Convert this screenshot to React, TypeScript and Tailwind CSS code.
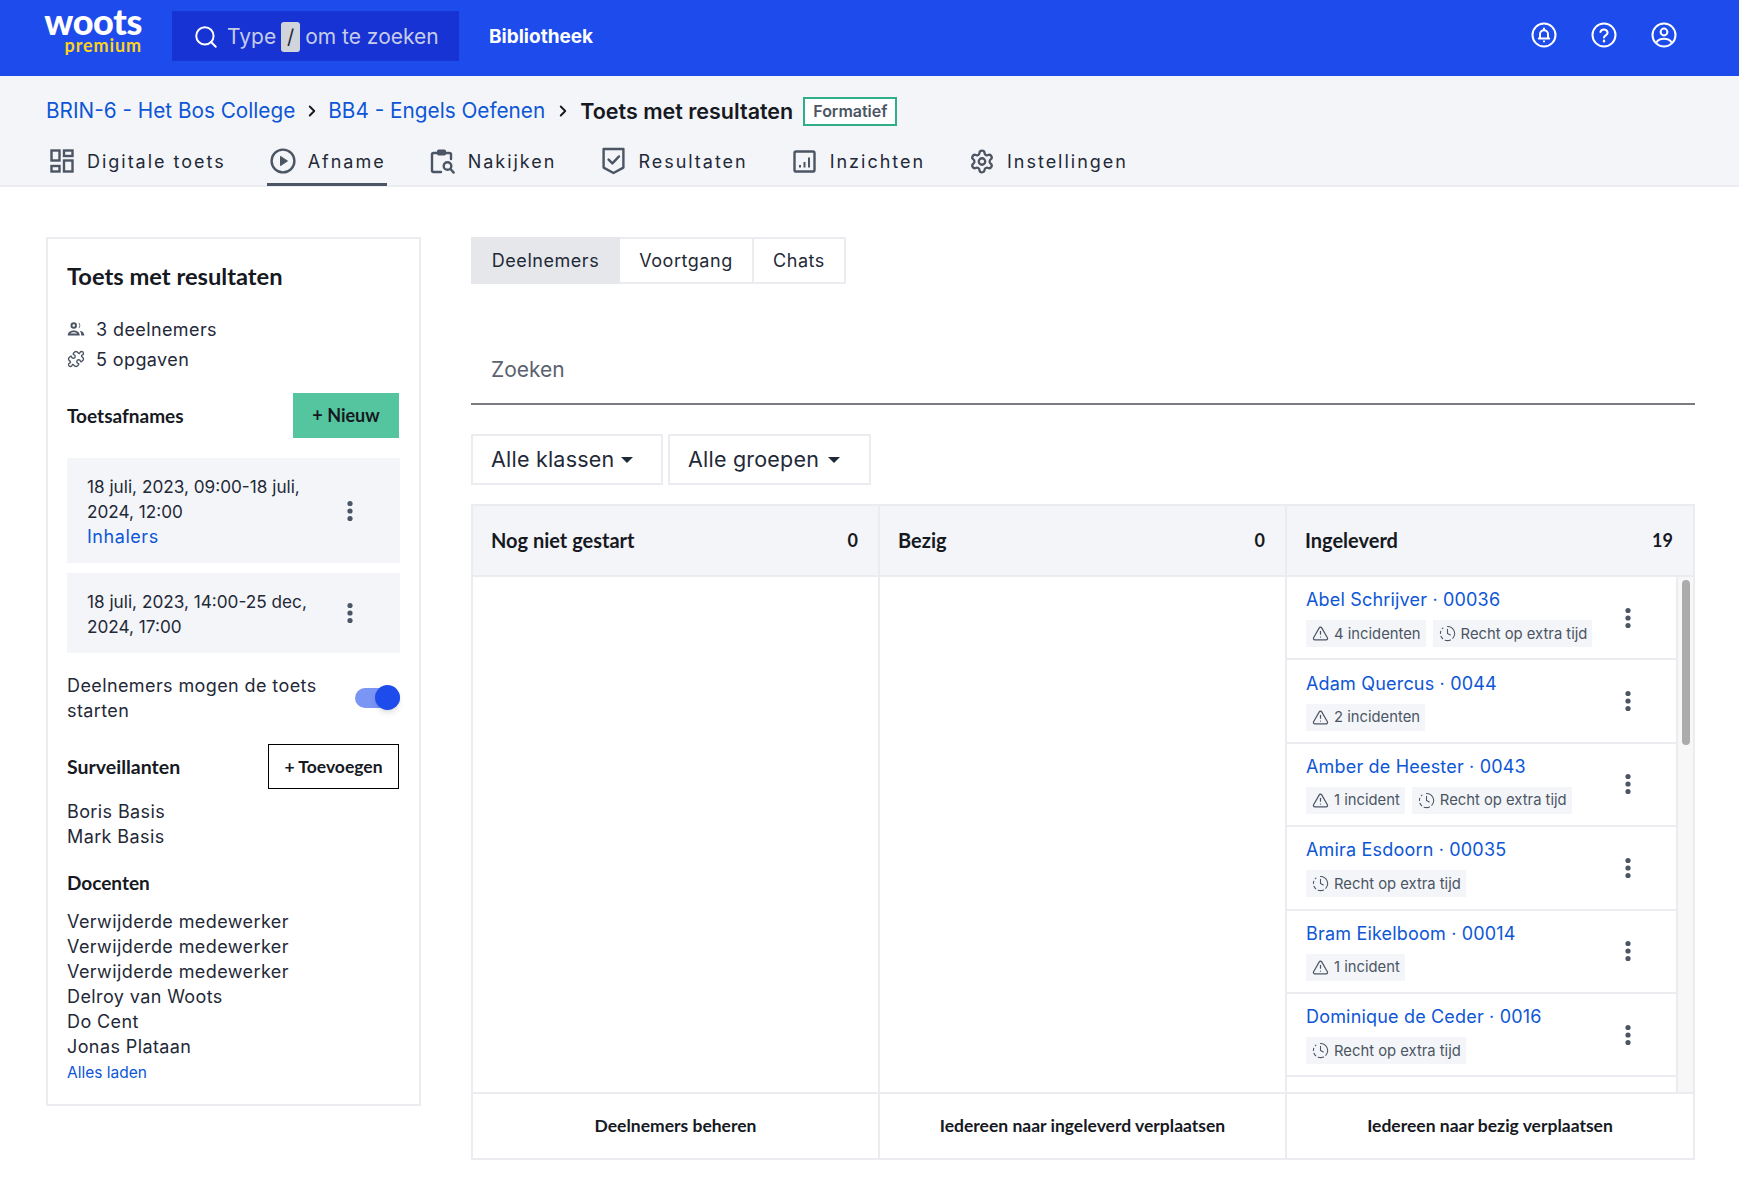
import React from "react";
import { Search, ChevronRight, Settings, TriangleAlert, ClockFading, Puzzle } from "lucide-react";

const HEAD = "font-['Lato',sans-serif] tracking-normal";
const LINE = "border-[#eaecef]";

function Dots() {
  return (
    <svg width="8" height="22" viewBox="0 0 8 22" className="shrink-0 fill-[#4b5563]">
      <circle cx="4" cy="3.5" r="2.6" />
      <circle cx="4" cy="11" r="2.6" />
      <circle cx="4" cy="18.5" r="2.6" />
    </svg>
  );
}

function BellCircle() {
  return (
    <svg width="26" height="26" viewBox="0 0 26 26" fill="none" stroke="white" strokeWidth="2">
      <circle cx="13" cy="13" r="11.5" />
      <path d="M9 16.5v-4.2a4 4 0 0 1 8 0v4.2zM7.8 16.5h10.4" strokeLinejoin="round" strokeLinecap="round" />
      <path d="M13 6.4v1.4M13 19.2v.4" strokeLinecap="round" />
    </svg>
  );
}
function HelpCircle() {
  return (
    <svg width="26" height="26" viewBox="0 0 26 26" fill="none" stroke="white" strokeWidth="2">
      <circle cx="13" cy="13" r="11.5" />
      <path d="M9.4 10a3.7 3.7 0 0 1 7.2 .8c0 2.4-3.6 2.6-3.6 4.8" strokeLinecap="round" />
      <path d="M13 18.8v.4" strokeLinecap="round" strokeWidth="2.4" />
    </svg>
  );
}
function UserCircle() {
  return (
    <svg width="26" height="26" viewBox="0 0 26 26" fill="none" stroke="white" strokeWidth="2">
      <circle cx="13" cy="13" r="11.5" />
      <circle cx="13" cy="10" r="3.4" />
      <path d="M5.4 20.4c1.6-2.6 4.4-3.7 7.6-3.7s6 1.1 7.6 3.7" />
    </svg>
  );
}

const ico = "stroke-[#4b5563] fill-none";
function GridIcon() {
  return (
    <svg width="24" height="24" viewBox="0 0 24 24" className={ico} strokeWidth="2.4">
      <rect x="1.5" y="1.5" width="8" height="10" />
      <rect x="14" y="1.500" width="8.500" height="5.500" />
      <rect x="1.5" y="17" width="8" height="5.500" />
      <rect x="14" y="11.500" width="8.500" height="11" />
    </svg>
  );
}
function PlayIcon() {
  return (
    <svg width="26" height="26" viewBox="0 0 26 26" className={ico} strokeWidth="2.4">
      <circle cx="13" cy="13" r="11.4" />
      <path d="M10.500 8.400l7 4.600-7 4.600z" className="fill-[#4b5563]" strokeWidth="1" strokeLinejoin="round" />
    </svg>
  );
}
function ClipSearch() {
  return (
    <svg width="26" height="27" viewBox="0 0 26 27" className={ico} strokeWidth="2.4">
      <path d="M11 24H3.500a1.500 1.500 0 0 1-1.500-1.500V6.500A1.500 1.500 0 0 1 3.500 5H7M16 5h3.500A1.500 1.500 0 0 1 21 6.500V11" strokeLinecap="round" />
      <rect x="7.500" y="2" width="8" height="5" rx="1" className="fill-[#4b5563]" strokeWidth="1" />
      <circle cx="17.500" cy="18" r="3.800" />
      <path d="M20.500 21l3.200 3.600" strokeLinecap="round" />
    </svg>
  );
}
function ShieldCheck() {
  return (
    <svg width="23" height="28" viewBox="0 0 23 28" className={ico} strokeWidth="2.4">
      <path d="M1.600 2h19.800v18.600L11.500 26 1.600 20.600z" strokeLinejoin="round" />
      <path d="M6.600 12.600l3.800 3.800 6.600-7" strokeLinecap="round" strokeLinejoin="round" />
    </svg>
  );
}
function ChartIcon() {
  return (
    <svg width="23" height="23" viewBox="0 0 23 23" className={ico} strokeWidth="2.4">
      <rect x="1.500" y="1.500" width="20" height="20" rx="1.600" />
      <path d="M7 15v2.500M11.500 12v5.500M16 7.500v10" strokeWidth="2" />
    </svg>
  );
}
function PeopleIcon() {
  return (
    <svg width="18" height="16" viewBox="0 0 24 20" className="fill-[#4b5563]">
      <path d="M9 1a4.300 4.300 0 1 1 0 8.600A4.300 4.300 0 0 1 9 1zm0 2.600a1.700 1.700 0 1 0 0 3.400 1.700 1.700 0 0 0 0-3.400z" />
      <path d="M14.800 1.200a4.300 4.300 0 0 1 0 8.200 6 6 0 0 0 0-8.200z" />
      <path d="M1 18.500c0-4.500 4-6.500 8-6.500s8 2 8 6.500zm3.400-2.400h9.200c-.8-1-2.600-1.700-4.600-1.700s-3.800.7-4.600 1.700z" />
      <path d="M17 12.200c3 .4 6 2.200 6 6.300h-4c0-2.700-.8-4.800-2-6.300z" />
    </svg>
  );
}

function TopTab({ icon, label, active }: { icon: React.ReactNode; label: string; active?: boolean }) {
  return (
    <div className={`flex items-center gap-3 h-[47px] pl-[3px] pr-[1px] border-b-[3px] ${active ? "border-[#4b5563]" : "border-transparent"}`}>
      <span className="w-[26px] h-7 flex items-center justify-center">{icon}</span>
      <span className="text-[18px] tracking-[0.11em] text-[#1f2937]">{label}</span>
    </div>
  );
}

function Badge({ kind, text }: { kind: "warn" | "time"; text: string }) {
  return (
    <span className="inline-flex items-center gap-[5px] h-[27px] pl-[6px] pr-[5px] bg-[#f4f5f9] text-[14.800px] tracking-normal text-[#4b5563]">
      {kind === "warn" ? (
        <TriangleAlert size={17} strokeWidth={1.7} className="text-[#4b5563]" />
      ) : (
        <ClockFading size={17} strokeWidth={1.5} className="text-[#4b5563]" />
      )}
      {text}
    </span>
  );
}

function Row({ name, badges }: { name: string; badges: { kind: "warn" | "time"; text: string }[] }) {
  return (
    <div className={`h-[83.4px] shrink-0 border-b-2 ${LINE} flex items-center pl-[19px] pr-[44px] justify-between`}>
      <div className="flex flex-col gap-[8px] mb-[1px]">
        <span className="text-[#0d56d6] text-[18px] tracking-[0.01em] leading-[25px]">{name}</span>
        <div className="flex gap-[7px]">
          {badges.map((b) => (
            <Badge key={b.text} {...b} />
          ))}
        </div>
      </div>
      <Dots />
    </div>
  );
}

function Header({ title, n, cls }: { title: string; n: number; cls: string }) {
  return (
    <div className={`${cls} flex items-center justify-between pl-[18px] pr-5 pb-[1px] bg-[#f4f5f9] text-[20px] font-bold text-[#16191f] ${HEAD}`}>
      <span>{title}</span>
      <span className="text-[18px]">{n}</span>
    </div>
  );
}

const rows: { name: string; badges: { kind: "warn" | "time"; text: string }[] }[] = [
  { name: "Abel Schrijver · 00036", badges: [{ kind: "warn", text: "4 incidenten" }, { kind: "time", text: "Recht op extra tijd" }] },
  { name: "Adam Quercus · 0044", badges: [{ kind: "warn", text: "2 incidenten" }] },
  { name: "Amber de Heester · 0043", badges: [{ kind: "warn", text: "1 incident" }, { kind: "time", text: "Recht op extra tijd" }] },
  { name: "Amira Esdoorn · 00035", badges: [{ kind: "time", text: "Recht op extra tijd" }] },
  { name: "Bram Eikelboom · 00014", badges: [{ kind: "warn", text: "1 incident" }] },
  { name: "Dominique de Ceder · 0016", badges: [{ kind: "time", text: "Recht op extra tijd" }] },
];

export default function App() {
  return (
    <div className="min-h-[1184px] bg-white font-['Inter',sans-serif] text-[#1f2937] overflow-hidden">
      <header className="h-[76px] bg-[#1e4bec] flex items-center pl-[46px] pr-[62px] pb-[4px]">
        <div className={`w-[96px] -mt-[12px] flex flex-col items-end ${HEAD}`}>
          <span className="text-white text-[36px] font-black leading-[30px] tracking-[-0.01em]">woots</span>
          <span className="text-[#fcd31c] text-[18px] font-bold leading-[18px] tracking-[0.05em]">premium</span>
        </div>
        <div className="ml-[30px] w-[287px] h-[50px] pt-[1px] bg-[#1733d4] flex items-center pl-[21px] gap-[5px] text-[21px] text-[#c5cce9]">
          <Search size={26} strokeWidth={1.8} className="text-white mr-[3px]" />
          <span>Type</span>
          <span className="w-[19px] h-[30px] bg-[#d1d5db] text-[#1f2937] rounded-[3px] flex items-center justify-center text-[20px]">/</span>
          <span>om te zoeken</span>
        </div>
        <span className="ml-[30px] mt-[3px] text-white font-bold text-[19px]">Bibliotheek</span>
        <div className="ml-auto flex gap-[34px] -mt-[2px]">
          <BellCircle />
          <HelpCircle />
          <UserCircle />
        </div>
      </header>

      <div className={`h-[111px] bg-[#f4f5f9] border-b-2 ${LINE} pl-[46px] flex flex-col`}>
        <div className="h-[70px] shrink-0 flex items-center text-[20.750px]">
          <span className="text-[#0d56d6]">BRIN-6 - Het Bos College</span>
          <ChevronRight size={18} strokeWidth={2.5} className="mx-[7.500px] text-[#16191f]" />
          <span className="text-[#0d56d6]">BB4 - Engels Oefenen</span>
          <ChevronRight size={18} strokeWidth={2.5} className="mx-[8.500px] text-[#16191f]" />
          <span className="text-[21.500px] font-semibold text-[#16191f]">Toets met resultaten</span>
          <span className="ml-[10px] h-[29px] px-2 border-2 border-[#2fae87] bg-white text-[16px] font-semibold text-[#4b5563] flex items-center">Formatief</span>
        </div>
        <div className="flex gap-10 mt-[-7px] shrink-0">
          <TopTab icon={<GridIcon />} label="Digitale toets" />
          <TopTab icon={<PlayIcon />} label="Afname" active />
          <TopTab icon={<ClipSearch />} label="Nakijken" />
          <TopTab icon={<ShieldCheck />} label="Resultaten" />
          <TopTab icon={<ChartIcon />} label="Inzichten" />
          <TopTab icon={<Settings size={27} strokeWidth={2.1} className="text-[#4b5563]" />} label="Instellingen" />
        </div>
      </div>

      <main className="flex items-start pl-[46px] pr-[44px] pt-[50px] gap-[50px]">
        <aside className={`w-[375px] shrink-0 border-2 ${LINE} px-[19px] pt-[20px] h-[869px] text-[18px] tracking-[0.022em] leading-[25px]`}>
          <h1 className={`text-[23.700px] font-bold text-[#16191f] leading-[34px] ${HEAD}`}>Toets met resultaten</h1>
          <div className="mt-[21px] flex items-center gap-[11px] h-[30px]"><PeopleIcon /><span>3 deelnemers</span></div>
          <div className="flex items-center gap-[11px] h-[30px]"><Puzzle size={18} strokeWidth={1.8} className="text-[#4b5563]" /><span>5 opgaven</span></div>
          <div className="mt-[19px] flex items-center justify-between">
            <span className={`text-[19px] font-bold text-[#16191f] ${HEAD}`}>Toetsafnames</span>
            <button className={`w-[106px] h-[45px] mr-[1px] bg-[#54c59f] text-[18px] font-bold text-[#16191f] ${HEAD}`}>+ Nieuw</button>
          </div>
          <div className="mt-[20px] h-[105px] bg-[#f4f5f9] pl-5 pr-[46px] flex items-center justify-between">
            <div className="w-[225px] pt-[2px] text-[17.200px] tracking-normal">18 juli, 2023, 09:00-18 juli, 2024, 12:00<br /><span className="text-[#0d56d6] text-[18px] tracking-[0.03em]">Inhalers</span></div>
            <Dots />
          </div>
          <div className="mt-[10px] h-[80px] bg-[#f4f5f9] pl-5 pr-[46px] flex items-center justify-between">
            <div className="w-[225px] pt-[2px] text-[17.200px] tracking-normal">18 juli, 2023, 14:00-25 dec, 2024, 17:00</div>
            <Dots />
          </div>
          <div className="mt-[20px] flex items-center justify-between">
            <div className="w-[270px]">Deelnemers mogen de toets starten</div>
            <div className="relative w-[45px] h-[20px] rounded-full bg-[#7a95f4]">
              <div className="absolute right-0 top-[-3px] w-[25px] h-[25px] rounded-full bg-[#1e4bec] shadow-md" />
            </div>
          </div>
          <div className="mt-[21px] flex items-center justify-between">
            <span className={`text-[19.500px] font-bold text-[#16191f] ${HEAD}`}>Surveillanten</span>
            <button className={`w-[131px] h-[45px] mr-[1px] border border-black text-[17.500px] font-bold text-[#16191f] ${HEAD}`}>+ Toevoegen</button>
          </div>
          <div className="mt-[10px]">Boris Basis<br />Mark Basis</div>
          <div className={`mt-[21px] h-[25px] text-[19px] font-bold text-[#16191f] ${HEAD}`}>Docenten</div>
          <div className="mt-[14px]">
            Verwijderde medewerker<br />Verwijderde medewerker<br />Verwijderde medewerker<br />Delroy van Woots<br />Do Cent<br />Jonas Plataan
          </div>
          <div className="text-[15.500px] tracking-normal text-[#0d56d6] leading-[26px] mt-[1px]">Alles laden</div>
        </aside>

        <section className="flex-1 min-w-0">
          <div className="flex h-[47px] text-[18px] tracking-[0.03em]">
            <div className="w-[149px] bg-[#e5e7eb] border-2 border-[#e5e7eb] flex items-center justify-center">Deelnemers</div>
            <div className={`w-[134px] border-y-2 border-r-2 ${LINE} flex items-center justify-center`}>Voortgang</div>
            <div className={`w-[92px] border-y-2 border-r-2 ${LINE} flex items-center justify-center`}>Chats</div>
          </div>
          <div className="mt-[38px] h-[83px] border-b-2 border-[#7c7c80] flex items-center pl-5 pt-[15px] text-[21px] text-[#5b6270]">Zoeken</div>
          <div className="mt-[29px] flex gap-[5px] text-[21.500px] tracking-[0.01em]">
            <div className={`w-[192px] h-[51px] border-2 ${LINE} flex items-center pl-[18px] gap-[7px]`}>Alle klassen <span className="w-0 h-0 border-x-[6px] border-x-transparent border-t-[6px] border-t-[#1f2937]" /></div>
            <div className={`w-[203px] h-[51px] border-2 ${LINE} flex items-center pl-[18px] gap-[9px]`}>Alle groepen <span className="w-0 h-0 border-x-[6px] border-x-transparent border-t-[6px] border-t-[#1f2937]" /></div>
          </div>
          <div className={`mt-[19px] border-2 ${LINE} w-[1224px]`}>
            <div className={`flex h-[71px] border-b-2 ${LINE}`}>
              <Header title="Nog niet gestart" n={0} cls={`w-[407px] border-r-2 ${LINE}`} />
              <Header title="Bezig" n={0} cls={`w-[407px] border-r-2 ${LINE}`} />
              <Header title="Ingeleverd" n={19} cls="flex-1" />
            </div>
            <div className="flex h-[515px]">
              <div className={`w-[407px] border-r-2 ${LINE}`} />
              <div className={`w-[407px] border-r-2 ${LINE}`} />
              <div className="flex-1 flex overflow-hidden">
                <div className={`flex-1 flex flex-col border-r-2 ${LINE} overflow-hidden`}>
                  {rows.map((r) => (
                    <Row key={r.name} {...r} />
                  ))}
                </div>
                <div className="w-[15px] bg-[#f7f7f7] pt-[3px] flex justify-center">
                  <div className="w-[8px] h-[165px] rounded-full bg-[#ababab]" />
                </div>
              </div>
            </div>
            <div className={`flex h-[66px] border-t-2 ${LINE} text-[17.500px] font-bold text-[#16191f] ${HEAD}`}>
              <div className={`w-[407px] border-r-2 ${LINE} flex items-center justify-center`}>Deelnemers beheren</div>
              <div className={`w-[407px] border-r-2 ${LINE} flex items-center justify-center`}>Iedereen naar ingeleverd verplaatsen</div>
              <div className="flex-1 flex items-center justify-center">Iedereen naar bezig verplaatsen</div>
            </div>
          </div>
        </section>
      </main>
    </div>
  );
}
